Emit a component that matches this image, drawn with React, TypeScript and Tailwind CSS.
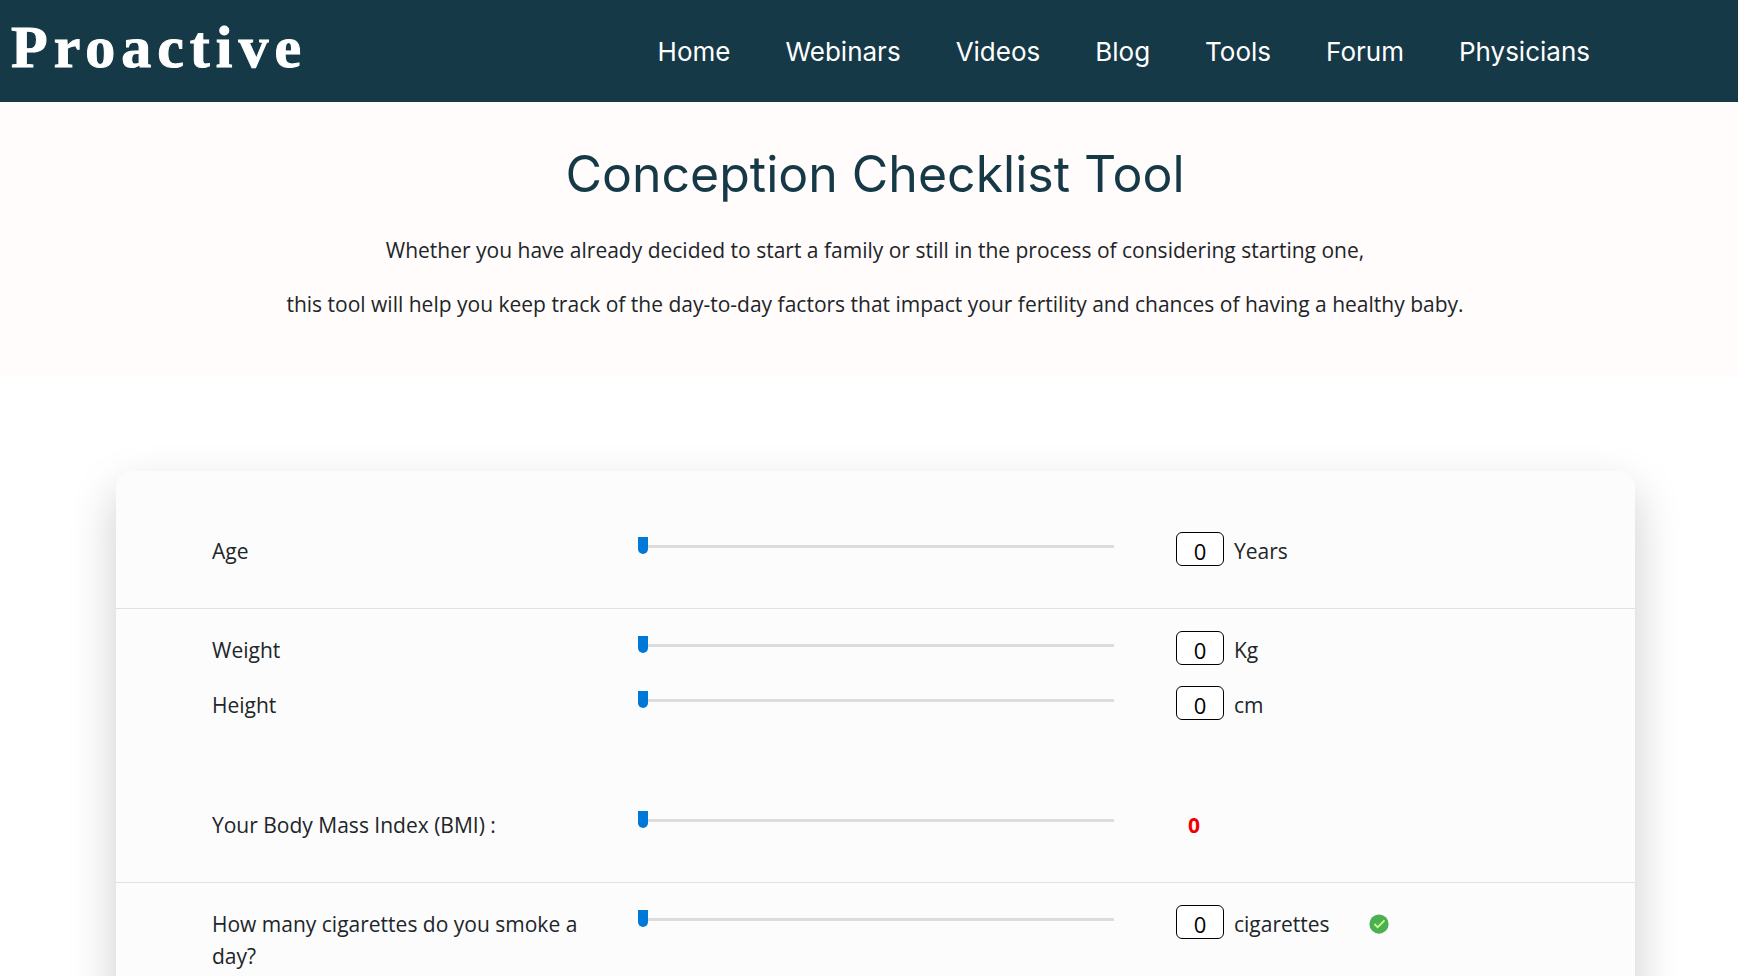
import { useState } from "react";

const links = ["Home", "Webinars", "Videos", "Blog", "Tools", "Forum", "Physicians"];

const rowGrid = "grid grid-cols-[426fr_538fr_459fr] items-start pl-24";

const sliderClass =
  "block h-[22px] w-[calc(100%-62px)] cursor-pointer appearance-none bg-transparent outline-none " +
  "[&::-webkit-slider-runnable-track]:h-[3px] [&::-webkit-slider-runnable-track]:bg-[#dcdcdc] " +
  "[&::-webkit-slider-thumb]:mt-[-8px] [&::-webkit-slider-thumb]:h-[17px] [&::-webkit-slider-thumb]:w-[10px] [&::-webkit-slider-thumb]:appearance-none " +
  "[&::-webkit-slider-thumb]:rounded-b-full [&::-webkit-slider-thumb]:bg-[#0078d7]";

function CheckBadge() {
  return (
    <svg viewBox="0 0 48 48" className="ml-[38px] size-[22px]" role="img" aria-label="Good">
      <circle cx="24" cy="24" r="21" fill="#4caf50" />
      <path d="M34.6 14.6 21 28.2l-5.6-5.6-2.8 2.8 8.4 8.4 16.4-16.4z" fill="#ccff90" />
    </svg>
  );
}

type FactorProps = {
  id: string;
  label: string;
  unit: string;
  max: number;
  ok?: boolean;
};

function Factor({ id, label, unit, max, ok }: FactorProps) {
  const [value, setValue] = useState(0);
  return (
    <div className={rowGrid}>
      <label htmlFor={id} className="pr-8">
        {label}
      </label>
      <input
        id={id}
        type="range"
        min={0}
        max={max}
        value={value}
        onChange={(e) => setValue(Number(e.target.value))}
        className={sliderClass}
      />
      <div className="flex h-8 items-center">
        <input
          type="text"
          aria-label={`${label} in ${unit}`}
          value={value}
          onChange={(e) => setValue(Number(e.target.value) || 0)}
          className="mb-1 h-[34px] w-12 rounded-md border border-black bg-white pt-[3px] text-center text-[22px] text-black"
        />
        <span className="ml-[10px]">{unit}</span>
        {ok && <CheckBadge />}
      </div>
    </div>
  );
}

export default function App() {
  return (
    <div className="min-h-screen overflow-hidden bg-white font-['Open_Sans',sans-serif] text-[21px] leading-8 text-[#212529]">
      <header className="flex h-[102px] items-center justify-between bg-[#163947] pr-[148px] pl-[11px] text-white">
        <a
          href="#"
          className="pb-2 font-['Liberation_Serif',serif] text-[60px] leading-none font-bold tracking-widest [-webkit-text-stroke:1px_white]"
        >
          Proactive
        </a>
        <nav className="flex gap-[55px] pt-[2px] font-['Inter',sans-serif] text-[26px]">
          {links.map((link) => (
            <a key={link} href="#">
              {link}
            </a>
          ))}
        </nav>
      </header>

      <section className="bg-[#fffcfb] pt-[43px] pb-14 pl-3 text-center">
        <h1 className="font-['Inter',sans-serif] text-[50px] leading-[58px] text-[#163947]">
          Conception Checklist Tool
        </h1>
        <p className="mt-[31px]">
          Whether you have already decided to start a family or still in the process of considering starting one,
        </p>
        <p className="mt-[22px]">
          this tool will help you keep track of the day-to-day factors that impact your fertility and chances of having
          a healthy baby.
        </p>
      </section>

      <main className="pt-[95px] pr-[103px] pl-[116px]">
        <form className="rounded-2xl bg-[#fcfcfc] shadow-[0_20px_48px_rgba(0,0,0,0.2)]">
          <section className="border-b border-[#dee2e6] pt-16 pb-[41px]">
            <Factor id="age" label="Age" unit="Years" max={60} />
          </section>
          <section className="border-b border-[#dee2e6] pt-[25px] pb-[41px]">
            <Factor id="weight" label="Weight" unit="Kg" max={200} />
            <div className="mt-[23px]">
              <Factor id="height" label="Height" unit="cm" max={250} />
            </div>
            <div className={`mt-[88px] ${rowGrid}`}>
              <label htmlFor="bmi">Your Body Mass Index (BMI) :</label>
              <input id="bmi" type="range" min={0} max={50} defaultValue={0} className={sliderClass} />
              <output htmlFor="bmi" className="pl-3 font-bold text-[#f00000]">
                0
              </output>
            </div>
          </section>
          <section className="pt-[25px] pb-16">
            <Factor id="cigarettes" label="How many cigarettes do you smoke a day?" unit="cigarettes" max={40} ok />
          </section>
        </form>
      </main>
    </div>
  );
}
